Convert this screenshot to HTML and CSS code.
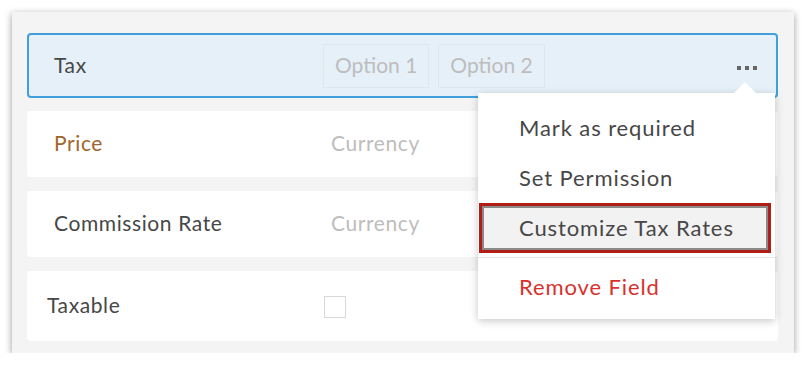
FILE: index.html
```html
<!DOCTYPE html>
<html lang="en">
<head>
	<meta charset="utf-8">
	<meta name="viewport" content="width=device-width, initial-scale=1.0">
	<link rel="stylesheet" href="styles.css">
</head>
<body>
	<div class="panel">
		<div class="field-row active">
			<span class="field-label">Tax</span>
			<div class="field-value">
				<span class="option">Option 1</span>
				<span class="option">Option 2</span>
			</div>
			<span class="more-btn"><i></i><i></i><i></i></span>

			<div class="menu">
				<div class="menu-item">Mark as required</div>
				<div class="menu-item">Set Permission</div>
				<div class="menu-item selected">Customize Tax Rates</div>
				<div class="menu-divider"></div>
				<div class="menu-item danger">Remove Field</div>
			</div>
		</div>
		<div class="field-row">
			<span class="field-label price">Price</span>
			<div class="field-value placeholder">Currency</div>
		</div>
		<div class="field-row">
			<span class="field-label">Commission Rate</span>
			<div class="field-value placeholder">Currency</div>
		</div>
		<div class="field-row tall">
			<span class="field-label short">Taxable</span>
			<div class="field-value">
				<span class="checkbox"></span>
			</div>
		</div>
	</div>
</body>
</html>
```

FILE: styles.css
```css
body {
	margin: 0;
	background: #fff;
	font-family: Lato, "Open Sans", sans-serif;
	color: #474747;
}
.panel {
	margin: 12px 0 0 12px;
	width: 782px;
	height: 341px;
	box-sizing: border-box;
	padding: 21px 16px 0 15px;
	background: #f4f4f4;
	box-shadow: 0 2px 7px rgba(0, 0, 0, 0.4);
	display: flex;
	flex-direction: column;
	gap: 13px;
}
.field-row {
	position: relative;
	display: flex;
	align-items: center;
	height: 66px;
	box-sizing: border-box;
	background: #fff;
	border-radius: 4px;
	font-size: 21px;
	letter-spacing: 0.6px;
}
.field-row + .field-row + .field-row {
	margin-top: 1px;
}
.field-row.active {
	height: 65px;
	background: #e6f0f9;
	border: 2px solid #3fa0dc;
}
.field-row.tall {
	height: 70px;
}
.field-label {
	width: 269px;
	padding-left: 27px;
	margin-top: -3px;
}
.active .field-label {
	padding-left: 25px;
}
.field-label.price {
	color: #a2662c;
}
.field-label.short {
	width: 276px;
	padding-left: 20px;
}
.field-value {
	display: flex;
	gap: 9px;
	flex: 1;
}
.placeholder {
	color: #bdbdbd;
	padding-left: 8px;
	margin-top: -3px;
}
.option {
	border: 1px solid #dfe6ec;
	color: #bdbdbd;
	height: 42px;
	line-height: 40px;
	padding: 0 11px;
	letter-spacing: 0;
}
.checkbox {
	display: block;
	width: 20px;
	height: 20px;
	border: 1px solid #d8d8d8;
	background: #fff;
	margin-left: 1px;
	margin-top: 2px;
}
.more-btn {
	display: flex;
	gap: 4px;
	margin-right: 19px;
	margin-top: 4px;
}
.more-btn i {
	width: 4px;
	height: 4px;
	background: #666;
}
.menu {
	position: absolute;
	left: 449px;
	top: 58px;
	width: 297px;
	padding: 10px 0 7px;
	background: #fff;
	box-shadow: 0 2px 8px rgba(0, 0, 0, 0.22);
	color: #474747;
	font-size: 22px;
	letter-spacing: 0.9px;
	z-index: 2;
}
.menu::before {
	content: "";
	position: absolute;
	right: 19px;
	top: -11px;
	border: 11px solid transparent;
	border-top: 0;
	border-bottom-color: #fff;
}
.menu-item {
	height: 50px;
	line-height: 50px;
	padding-left: 41px;
}
.menu-item.selected {
	box-sizing: border-box;
	margin: 0 4px 0 1px;
	padding-left: 37px;
	line-height: 44px;
	background: #f2f2f2;
	border: 3px solid #b11d17;
	box-shadow: inset 0 0 0 2px #8a8a8a;
}
.menu-divider {
	height: 1px;
	margin: 4px 0;
	background: #e6e6e6;
}
.menu-item.danger {
	color: #d8312d;
}
```
